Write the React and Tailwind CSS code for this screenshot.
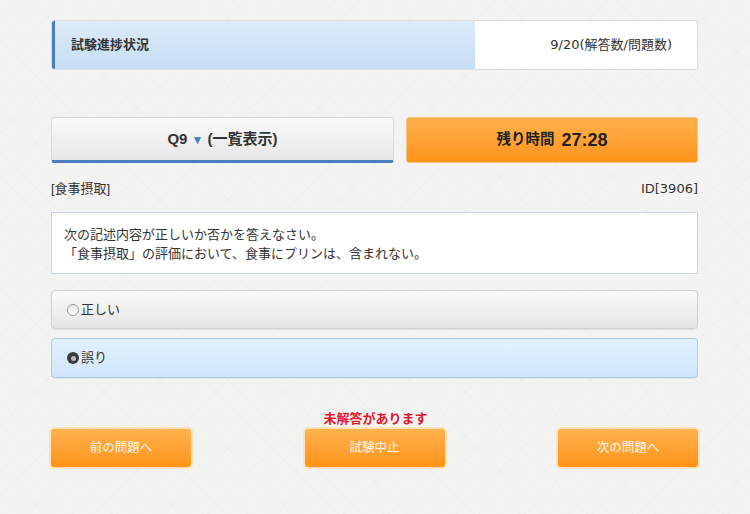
import React from "react";

const jp = { fontFamily: '"Liberation Sans", "Noto Sans CJK JP", sans-serif' };
const dv = { fontFamily: '"DejaVu Sans", "Noto Sans CJK JP", sans-serif' };

export default function App() {
  return (
    <div
      className="w-[750px] h-[514px] bg-[#f3f3f1] bg-[image:repeating-linear-gradient(45deg,transparent_0_15px,rgba(0,0,0,0.012)_15px_16px),repeating-linear-gradient(-45deg,transparent_0_15px,rgba(0,0,0,0.012)_15px_16px)] text-[#333]"
      style={jp}
    >
      <div className="w-[647px] ml-[51px] pt-[20px] flex flex-col">
        {/* progress */}
        <div className="flex h-[50px] rounded-[3px] border border-[#dcdcdc] bg-white overflow-hidden">
          <div className="w-[423px] flex items-center border-l-[3px] border-[#4a80bf] bg-gradient-to-b from-[#dcebf9] to-[#c6ddf3] pl-[16px]">
            <span className="text-[13px] font-bold text-[#333]">試験進捗状況</span>
          </div>
          <div className="flex-1 flex items-center justify-end pr-[25px]">
            <span className="text-[13px] text-[#333]" style={dv}>9/20(解答数/問題数)</span>
          </div>
        </div>

        {/* buttons */}
        <div className="mt-[47px] flex gap-[12px] h-[46px]">
          <div className="w-[343px] flex items-center justify-center rounded-[3px] border border-[#dadada] border-b-[3px] border-b-[#4a80bf] bg-gradient-to-b from-[#fafafa] to-[#e6e6e6]">
            <span className="text-[15px] font-bold text-[#333]">
              Q9 <span className="text-[#3f7fc4] text-[12px]">▼</span> (一覧表示)
            </span>
          </div>
          <div className="flex-1 flex items-center justify-center rounded-[3px] border border-[#f3c48a] bg-gradient-to-b from-[#ffb24c] to-[#ff9311]">
            <span className="text-[14.5px] font-bold text-[#222]">残り時間</span>
            <span className="ml-[7px] text-[18px] font-bold text-[#222]">27:28</span>
          </div>
        </div>

        {/* label row */}
        <div className="mt-[18px] flex justify-between text-[13px] text-[#333] leading-[16px]">
          <span>[食事摂取]</span>
          <span style={dv}>ID[3906]</span>
        </div>

        {/* question */}
        <div className="mt-[15px] h-[62px] bg-white border border-[#c9d6e6] px-[12px] pt-[12px] text-[13px] leading-[19px] text-[#333]">
          <p>次の記述内容が正しいか否かを答えなさい。</p>
          <p>「食事摂取」の評価において、食事にプリンは、含まれない。</p>
        </div>

        {/* options */}
        <div className="mt-[16px] h-[39px] flex items-center rounded-[4px] border border-[#d0d0d0] bg-gradient-to-b from-[#fbfbfb] to-[#e4e4e4] shadow-[0_1px_1px_rgba(0,0,0,0.08)] pl-[15px]">
          <span className="w-[12px] h-[12px] rounded-full border border-[#9a9a9a] bg-gradient-to-b from-[#e8e8e8] to-white" />
          <span className="ml-[2px] text-[13px] text-[#333]">正しい</span>
        </div>
        <div className="mt-[9px] h-[40px] flex items-center rounded-[4px] border border-[#a9cdea] bg-gradient-to-b from-[#e2f1ff] to-[#cfe6fb] shadow-[0_1px_1px_rgba(0,0,0,0.06)] pl-[15px]">
          <span className="w-[12px] h-[12px] rounded-full bg-[#3a3a3a] flex items-center justify-center">
            <span className="w-[5px] h-[5px] rounded-full bg-[#bbb]" />
          </span>
          <span className="ml-[2px] text-[13px] text-[#333]">誤り</span>
        </div>

        {/* warning */}
        <div className="mt-[33px] text-center text-[13px] font-bold text-[#e0182d] leading-[16px] pl-[2px]">
          未解答があります
        </div>

        {/* nav */}
        <div className="mt-[2px] flex justify-between">
          {["前の問題へ", "試験中止", "次の問題へ"].map((t) => (
            <div
              key={t}
              className="w-[140px] h-[38px] flex items-center justify-center rounded-[3px] bg-gradient-to-b from-[#ffb24c] to-[#ff9311] shadow-[0_0_0_2px_#fde2bd]"
            >
              <span className="text-[12.5px] text-[#fff6e6]">{t}</span>
            </div>
          ))}
        </div>
      </div>
    </div>
  );
}
